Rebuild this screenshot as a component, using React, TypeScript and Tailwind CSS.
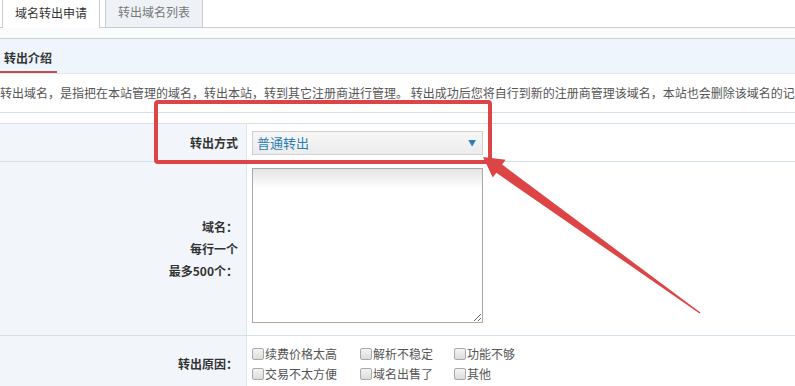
import React from 'react';

const reasons = [
  ['续费价格太高', '解析不稳定', '功能不够'],
  ['交易不太方便', '域名出售了', '其他'],
];

function Checkbox({ label, width }: { label: string; width: string }) {
  return (
    <label className={`flex items-center ${width}`}>
      <span className="w-[12px] h-[12px] border border-[#a9a9a9] rounded-[2px] bg-gradient-to-b from-[#f4f4f4] to-[#dcdcdc]" />
      <span className="ml-[1px] text-[12px] leading-[20px] text-[#555]">{label}</span>
    </label>
  );
}

export default function App() {
  return (
    <div
      className="relative w-[795px] h-[386px] overflow-hidden bg-white"
      style={{ fontFamily: '"Noto Sans CJK SC", "Noto Sans", sans-serif' }}
    >
      {/* tabs */}
      <div className="flex h-[28px] border-b border-[#c8ccd0]">
        <div className="ml-[2px] w-[98px] h-[28px] -mb-px bg-white border-x border-[#c8ccd0] flex items-center justify-center pb-[3px] text-[12px] text-[#333]">
          域名转出申请
        </div>
        <div className="ml-[5px] w-[98px] h-[27px] bg-[#eef2f6] border-x border-[#c8ccd0] flex items-center justify-center pb-[3px] text-[12px] text-[#777]">
          转出域名列表
        </div>
      </div>
      <div className="h-[11px] bg-[#f9fbfc] border-b border-[#c8ced4]" />

      {/* section header */}
      <div className="h-[35px] bg-[#eef5fd] border-b border-[#dfe6ed] flex items-end">
        <span className="w-[57px] pl-[4px] pb-[3px] leading-[20px] text-[12px] font-bold text-[#333] border-b-2 border-[#c1504a]">
          转出介绍
        </span>
      </div>

      {/* intro */}
      <div className="h-[38px] flex items-center whitespace-nowrap text-[12px] text-[#555]">
        转出域名，是指把在本站管理的域名，转出本站，转到其它注册商进行管理。 转出成功后您将自行到新的注册商管理该域名，本站也会删除该域名的记录。
      </div>

      {/* form */}
      <div className="h-[11px] border-t border-[#d3e0ea]" />
      <div className="grid grid-cols-[247px_1fr] h-[38px] border-t border-[#d3e0ea]">
        <div className="bg-[#f2f6fb] border-r border-[#dbe5ee] flex items-center justify-end pr-[8px] text-[12px] font-bold text-[#333]">
          转出方式
        </div>
        <div className="flex items-center pl-[5px]">
          <div className="w-[231px] h-[24px] border border-[#cfcfcf] bg-gradient-to-b from-[#f7f7f7] to-[#ececec] flex items-center justify-between pl-[4px] pr-[6px]">
            <span className="text-[13px] text-[#2b7db5]">普通转出</span>
            <span className="text-[8px] text-[#2b7db5]">▼</span>
          </div>
        </div>
      </div>
      <div className="grid grid-cols-[247px_1fr] h-[174px] border-t border-[#d3e0ea]">
        <div className="bg-[#f2f6fb] border-r border-[#dbe5ee] flex flex-col items-end justify-center pr-[8px] text-[12px] font-bold text-[#333] leading-[22px]">
          <span>域名：</span>
          <span>每行一个</span>
          <span>最多500个：</span>
        </div>
        <div className="pl-[5px] pt-[6px]">
          <textarea
            readOnly
            className="block w-[231px] h-[155px] border border-[#a9a9a9] bg-[linear-gradient(to_bottom,#e4e4e4,#ffffff_20px)] outline-none"
          />
        </div>
      </div>
      <div className="grid grid-cols-[247px_1fr] h-[56px] border-t border-[#d3e0ea]">
        <div className="bg-[#f2f6fb] border-r border-[#dbe5ee] flex items-center justify-end pr-[8px] text-[12px] font-bold text-[#333]">
          转出原因：
        </div>
        <div className="pl-[5px] pt-[8px] flex flex-col">
          {reasons.map((row, i) => (
            <div key={i} className="flex">
              <Checkbox label={row[0]} width="w-[108px]" />
              <Checkbox label={row[1]} width="w-[94px]" />
              <Checkbox label={row[2]} width="w-[80px]" />
            </div>
          ))}
        </div>
      </div>

      {/* red annotation */}
      <svg className="absolute inset-0 pointer-events-none" width="795" height="386" viewBox="0 0 795 386">
        <rect x="156" y="102" width="334" height="60" rx="2" fill="none" stroke="#dc4446" strokeWidth="4" />
        <polygon
          points="483,157 505.6,159.8 502.1,164.6 700.4,312.5 699.6,313.5 496.3,172.8 492.8,177.6"
          fill="#dc4446"
        />
      </svg>
    </div>
  );
}
